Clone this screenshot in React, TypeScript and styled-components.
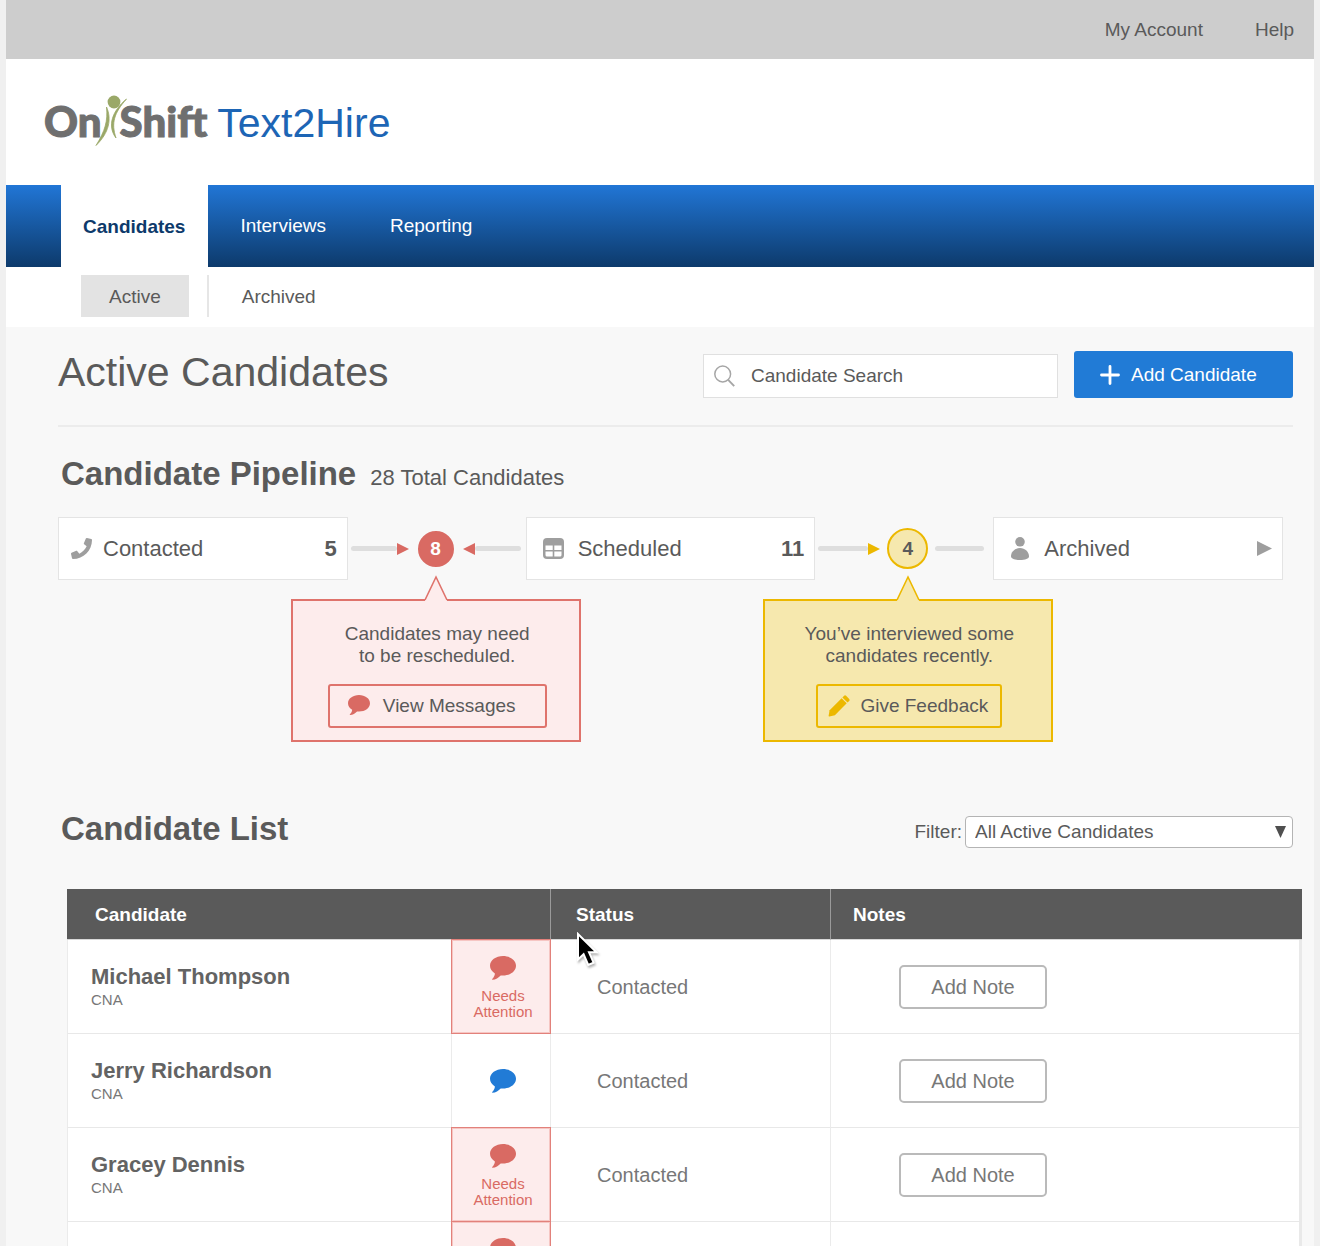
import React from "react";
import styled, { createGlobalStyle } from "styled-components";
import { FaPhone } from "react-icons/fa";

const color = {
  text: "#5a5a5a",
  muted: "#9e9e9e",
  line: "#e4e4e4",
  blue: "#217bd6",
  navy: "#0d3a6b",
  red: "#d96a63",
  redLine: "#df736c",
  redSoft: "#fdecec",
  gold: "#ecb800",
  goldSoft: "#f6e8ae",
};

const GlobalStyle = createGlobalStyle`
  *, *::before, *::after { box-sizing: border-box; }
  body {
    margin: 0;
    background: #f0f0f0;
    color: ${color.text};
    font-family: "Liberation Sans", Arial, sans-serif;
    font-size: 19px;
    line-height: 22px;
  }
  h1, h2, p { margin: 0; }
  a { color: inherit; text-decoration: none; }
  button, input, select { font: inherit; color: inherit; margin: 0; }
  button { cursor: pointer; }
  svg { display: block; flex: none; }
`;

const Shell = styled.div`
  height: 100vh;
  overflow: hidden auto;
  scrollbar-width: none;
  padding: 0 6px;
`;

const Page = styled.div`
  min-height: 100%;
  background: #f8f8f8;
`;

const TopBar = styled.div`
  display: flex;
  justify-content: flex-end;
  align-items: center;
  gap: 52px;
  height: 59px;
  padding: 0 20px;
  background: #cdcdcd;
`;

const Header = styled.header`
  display: flex;
  align-items: center;
  gap: 10px;
  height: 126px;
  padding: 0 38px;
  background: #fff;
`;

const Brand = styled.div`
  display: flex;
  align-items: center;
  padding-bottom: 3px;
  color: #6f6f6f;
  font-family: Lato, sans-serif;
  font-weight: 900;
  font-size: 42px;
  line-height: 52px;
  -webkit-text-stroke: 1px #6f6f6f;

  svg { margin: 0 -8px; }
`;

const Product = styled.span`
  color: #1d65b5;
  font-size: 41px;
  line-height: 52px;
  padding-top: 2px;
`;

const Nav = styled.nav`
  display: flex;
  height: 82px;
  padding-left: 55px;
  background: linear-gradient(#2176d6, ${color.navy});
`;

const NavTab = styled.a<{ $active?: boolean }>`
  display: flex;
  align-items: center;
  padding: ${(p) => (p.$active ? "2px 23px 0 22px" : "0 32px")};
  color: ${(p) => (p.$active ? color.navy : "#fff")};
  background: ${(p) => (p.$active ? "#fff" : "transparent")};
  font-weight: ${(p) => (p.$active ? 700 : 400)};
`;

const SubNav = styled.nav`
  display: flex;
  align-items: center;
  gap: 18px;
  height: 60px;
  padding: 0 0 2px 75px;
  background: #fff;
`;

const SubTab = styled.a<{ $active?: boolean }>`
  padding: 11px 28px 9px;
  background: ${(p) => (p.$active ? "#e3e3e3" : "transparent")};

  & + & {
    padding-left: 33px;
    border-left: 2px solid #e6e6e6;
  }
`;

const Main = styled.main`
  padding: 24px 21px 0 52px;
`;

const TitleRow = styled.div`
  display: flex;
  align-items: flex-end;
  gap: 16px;
  padding-bottom: 27px;
  border-bottom: 2px solid #ececec;
`;

const Title = styled.h1`
  flex: 1;
  align-self: flex-start;
  font-weight: 400;
  font-size: 41px;
  line-height: 42px;
`;

const SearchBox = styled.label`
  display: flex;
  align-items: center;
  gap: 16px;
  width: 355px;
  height: 44px;
  padding-left: 10px;
  background: #fff;
  border: 1px solid #e0e0e0;

  input {
    flex: 1;
    min-width: 0;
    border: 0;
    outline: 0;
    padding: 0;
    background: transparent;
  }
  input::placeholder { color: ${color.text}; opacity: 1; }
`;

const AddButton = styled.button`
  display: flex;
  align-items: center;
  gap: 11px;
  width: 219px;
  height: 47px;
  padding: 0 26px;
  border: 0;
  border-radius: 3px;
  background: ${color.blue};
  color: #fff;
`;

const SectionHead = styled.div`
  display: flex;
  align-items: baseline;
  gap: 14px;
  padding: 26px 0 22px 3px;
`;

const SectionTitle = styled.h2`
  font-size: 33px;
  line-height: 42px;
`;

const Total = styled.span`
  font-size: 22px;
`;

const Pipeline = styled.div`
  display: grid;
  grid-template-columns: 1fr 178px 1fr 178px 1fr;
  padding: 0 10px 228px 0;
`;

const Stage = styled.a<{ $tight?: boolean }>`
  display: flex;
  align-items: center;
  gap: ${(p) => (p.$tight ? 11 : 14)}px;
  height: 63px;
  padding: 0 10px 0 ${(p) => (p.$tight ? 12 : 16)}px;
  background: #fff;
  border: 1px solid ${color.line};
  font-size: 22px;

  strong { margin-left: auto; }
  svg:last-child { margin-left: auto; }
`;

const Connector = styled.div<{ $tone: Tone }>`
  display: flex;
  align-items: center;
  gap: ${(p) => (p.$tone === "red" ? 9 : 7)}px;
  height: 63px;
  padding: 0 ${(p) => (p.$tone === "red" ? 5 : 9)}px 0 3px;
`;

const Track = styled.span<{ $short?: boolean }>`
  display: flex;
  flex: ${(p) => (p.$short ? "0 0 49px" : 1)};
  align-items: center;
`;

const Line = styled.span`
  flex: 1;
  height: 5px;
  border-radius: 3px;
  background: #dedede;
`;

const Node = styled.div<{ $tone: Tone }>`
  position: relative;
  display: flex;
  flex: none;
  align-items: center;
  justify-content: center;
  width: ${(p) => (p.$tone === "red" ? 36 : 41)}px;
  height: ${(p) => (p.$tone === "red" ? 36 : 41)}px;
  border-radius: 50%;
  border: 2px solid ${(p) => (p.$tone === "red" ? color.red : color.gold)};
  background: ${(p) => (p.$tone === "red" ? color.red : color.goldSoft)};
  color: ${(p) => (p.$tone === "red" ? "#fff" : color.text)};
`;

const Callout = styled.div`
  position: absolute;
  top: calc(50% + 26px);
  left: 50%;
  display: flex;
  flex-direction: column;
  align-items: center;
  width: 290px;
  transform: translateX(-50%);

  > svg { margin-bottom: -2px; z-index: 1; }
`;

const CalloutBody = styled.div<{ $tone: Tone }>`
  display: flex;
  flex-direction: column;
  align-items: center;
  gap: 17px;
  width: 100%;
  height: 143px;
  padding: 22px 0 0 3px;
  border: 2px solid ${(p) => (p.$tone === "red" ? color.redLine : color.gold)};
  background: ${(p) => (p.$tone === "red" ? color.redSoft : color.goldSoft)};
  color: ${color.text};
  text-align: center;

  p { white-space: pre-line; }
`;

const CalloutButton = styled.button<{ $tone: Tone }>`
  display: flex;
  align-items: center;
  gap: ${(p) => (p.$tone === "red" ? 13 : 10)}px;
  height: 44px;
  padding: ${(p) => (p.$tone === "red" ? "0 29px 0 18px" : "0 12px 0 10px")};
  border: 2px solid ${(p) => (p.$tone === "red" ? color.redLine : color.gold)};
  border-radius: 3px;
  background: transparent;
`;

const ListHead = styled.div`
  display: flex;
  align-items: center;
  justify-content: space-between;
  padding-left: 3px;
`;

const Filter = styled.div`
  display: flex;
  align-items: center;
  gap: 3px;
  padding-top: 6px;
`;

const SelectWrap = styled.div`
  display: grid;
  align-items: center;
  width: 328px;

  > * { grid-area: 1 / 1; }
  svg { justify-self: end; margin-right: 7px; pointer-events: none; }
`;

const Select = styled.select`
  appearance: none;
  width: 100%;
  height: 32px;
  padding: 0 28px 0 9px;
  border: 1px solid #b4b4b4;
  border-radius: 4px;
  background: #fff;
`;

const TableWrap = styled.div`
  margin: 39px -9px 0 9px;
`;

const Table = styled.table`
  width: 100%;
  table-layout: fixed;
  border-collapse: separate;
  border-spacing: 0;
  background: #fff;
`;

const Th = styled.th<{ $pad: number }>`
  position: relative;
  z-index: 2;
  height: 51px;
  padding: 2px 0 0 ${(p) => p.$pad}px;
  background: #5a5a5a;
  border-bottom: 1px solid #d8d8d8;
  color: #fff;
  text-align: left;

  & + & { border-left: 1px solid #9a9a9a; }
`;

const Td = styled.td<{ $pad: number }>`
  height: 94px;
  padding: 0 0 0 ${(p) => p.$pad}px;
  border-left: 1px solid #ebebeb;
  border-bottom: 1px solid #e8e8e8;
  color: #777;
  font-size: 20px;

  &:last-child { border-right: 3px solid #e9e9e9; }
`;

const MessageTd = styled(Td)<{ $attention: boolean }>`
  color: ${(p) => (p.$attention ? color.red : color.blue)};
  font-size: 15px;
  line-height: 16px;
  text-align: center;
  ${(p) =>
    p.$attention &&
    `
    position: relative;
    z-index: 3;
    padding-top: 16px;
    vertical-align: top;
    background: ${color.redSoft};
    border-color: #e2817b;
    box-shadow: 0 -1px 0 #e2817b, 1px 0 0 #e2817b, 1px -1px 0 #e2817b, inset 0 0 0 1px #f6c6c3;
  `}

  svg { margin: 0 auto; }
  span { display: block; margin-top: 8px; }
`;

const Name = styled.strong`
  display: block;
  padding-top: 2px;
  color: #636363;
  font-size: 22px;
  line-height: 24px;
`;

const Role = styled.span`
  display: block;
  font-size: 15px;
  line-height: 22px;
`;

const NoteButton = styled.button`
  width: 148px;
  height: 44px;
  padding: 0;
  border: 2px solid #bababa;
  border-radius: 5px;
  background: #fff;
`;

const Pointer = styled.svg`
  position: absolute;
  left: 24px;
  top: 43px;
  z-index: 2;
  filter: drop-shadow(1px 2px 1px rgba(0, 0, 0, 0.3));
`;

type Tone = "red" | "gold";

const Figure = () => (
  <svg width="34" height="52" viewBox="0 0 34 52" fill="#9aa868" aria-hidden="true">
    <circle cx="20" cy="7" r="6.4" />
    <path d="M12.5 12C18 24 15 38 2 50.5C11 36 14 26 12.5 12Z" stroke="#9aa868" strokeWidth="0.8" />
    <path d="M32.5 4C20 18 17 28 22 43C13 31 18 16 32.5 4Z" stroke="#9aa868" strokeWidth="0.8" />
  </svg>
);

const Bubble = ({ size = 26, fill = "currentColor" }) => (
  <svg width={size} height={(size * 24) / 26} viewBox="0 0 26 24" fill={fill} aria-hidden="true">
    <path d="M13 0C20.2 0 26 4.3 26 9.8S20.2 19.6 13 19.6C12.2 19.6 11.4 19.5 10.7 19.4C8.6 21.6 5.7 23.6 2.4 23.7C2 23.7 1.9 23.2 2.2 22.9C3.9 21.2 4.8 19.4 4.9 17.4C1.9 15.6 0 12.9 0 9.8C0 4.3 5.8 0 13 0Z" />
  </svg>
);

const Pencil = () => (
  <svg width="22" height="22" viewBox="0 0 22 22" fill={color.gold} aria-hidden="true">
    <path d="M13.6 3.2L18.7 8.3L6.9 20.2L1.4 21.5Q.5 21.6.6 20.7L1.6 15.3Z" />
    <path d="M14.4 2.4L16.1.7Q17.1-.1 18.1.8L21.2 4Q22 5 21.2 5.9L19.5 7.5Z" />
  </svg>
);

const Calendar = () => (
  <svg width="21" height="21" viewBox="0 0 21 21" aria-hidden="true">
    <rect width="21" height="21" rx="4" fill={color.muted} />
    <path d="M2.5 7.5H9.7V12H2.5ZM11.3 7.5H18.5V12H11.3ZM2.5 13.6H9.7V18.5H4Q2.5 18.5 2.5 17ZM11.3 13.6H18.5V17Q18.5 18.5 17 18.5H11.3Z" fill="#fff" />
  </svg>
);

const Person = () => (
  <svg width="20" height="23" viewBox="-1 0 20 23" fill={color.muted} aria-hidden="true">
    <circle cx="9" cy="4.8" r="4.8" />
    <path d="M9 11C14 11 18 15 18 19.2C18 21.8 14 23 9 23S0 21.8 0 19.2C0 15 4 11 9 11Z" />
  </svg>
);

const Arrow = ({ left = false, fill = color.red, w = 12, h = 12 }) => (
  <svg width={w} height={h} viewBox="0 0 12 12" fill={fill} aria-hidden="true">
    <path d={left ? "M12 0V12L0 6Z" : "M0 0V12L12 6Z"} />
  </svg>
);

const Tip = ({ tone }: { tone: Tone }) => (
  <svg width="24" height="26" viewBox="0 0 24 26" aria-hidden="true">
    <path
      d="M1 25L12 2L23 25V26H1Z"
      fill={tone === "red" ? color.redSoft : color.goldSoft}
    />
    <path
      d="M1 25L12 2L23 25"
      fill="none"
      stroke={tone === "red" ? color.redLine : color.gold}
      strokeWidth="1.6"
    />
  </svg>
);

type Candidate = { name?: string; role?: string; status?: string; attention: boolean };

const candidates: Candidate[] = [
  { name: "Michael Thompson", role: "CNA", status: "Contacted", attention: true },
  { name: "Jerry Richardson", role: "CNA", status: "Contacted", attention: false },
  { name: "Gracey Dennis", role: "CNA", status: "Contacted", attention: true },
  { attention: true },
];

export default function App() {
  return (
    <>
      <GlobalStyle />
      <Shell>
        <Page>
          <TopBar>
            <a href="#account">My Account</a>
            <a href="#help">Help</a>
          </TopBar>
          <Header>
            <Brand>
              <span>On</span>
              <Figure />
              <span>Shift</span>
            </Brand>
            <Product>Text2Hire</Product>
          </Header>
          <Nav>
            <NavTab href="#candidates" $active>Candidates</NavTab>
            <NavTab href="#interviews">Interviews</NavTab>
            <NavTab href="#reporting">Reporting</NavTab>
          </Nav>
          <SubNav>
            <SubTab href="#active" $active>Active</SubTab>
            <SubTab href="#archived">Archived</SubTab>
          </SubNav>
          <Main>
            <TitleRow>
              <Title>Active Candidates</Title>
              <SearchBox>
                <svg width="21" height="22" viewBox="0 0 21 22" fill="none" stroke="#a6a6a6" strokeWidth="1.5" aria-hidden="true">
                  <circle cx="8.7" cy="9" r="7.9" />
                  <path d="M14.2 14.8L20.2 21.2" strokeWidth="1.9" />
                </svg>
                <input type="search" placeholder="Candidate Search" aria-label="Candidate Search" />
              </SearchBox>
              <AddButton type="button">
                <svg width="20" height="20" viewBox="0 0 20 20" stroke="#fff" strokeWidth="2.8" strokeLinecap="round" aria-hidden="true">
                  <path d="M10 1.5V18.5M1.5 10H18.5" />
                </svg>
                Add Candidate
              </AddButton>
            </TitleRow>

            <SectionHead>
              <SectionTitle>Candidate Pipeline</SectionTitle>
              <Total>28 Total Candidates</Total>
            </SectionHead>
            <Pipeline>
              <Stage href="#contacted" $tight>
                <FaPhone size={21} color={color.muted} />
                Contacted
                <strong>5</strong>
              </Stage>
              <Connector $tone="red">
                <Track><Line /><Arrow /></Track>
                <Node $tone="red">
                  <strong>8</strong>
                  <Callout>
                    <Tip tone="red" />
                    <CalloutBody $tone="red">
                      <p>{"Candidates may need\nto be rescheduled."}</p>
                      <CalloutButton type="button" $tone="red">
                        <Bubble size={22} fill={color.red} />
                        View Messages
                      </CalloutButton>
                    </CalloutBody>
                  </Callout>
                </Node>
                <Track><Arrow left /><Line /></Track>
              </Connector>
              <Stage href="#scheduled">
                <Calendar />
                Scheduled
                <strong>11</strong>
              </Stage>
              <Connector $tone="gold">
                <Track><Line /><Arrow fill={color.gold} /></Track>
                <Node $tone="gold">
                  <strong>4</strong>
                  <Callout>
                    <Tip tone="gold" />
                    <CalloutBody $tone="gold">
                      <p>{"You’ve interviewed some\ncandidates recently."}</p>
                      <CalloutButton type="button" $tone="gold">
                        <Pencil />
                        Give Feedback
                      </CalloutButton>
                    </CalloutBody>
                  </Callout>
                </Node>
                <Track $short><Line /></Track>
              </Connector>
              <Stage href="#archived-stage">
                <Person />
                Archived
                <Arrow fill={color.muted} w={15} h={15} />
              </Stage>
            </Pipeline>

            <ListHead>
              <SectionTitle>Candidate List</SectionTitle>
              <Filter>
                <label htmlFor="filter">Filter:</label>
                <SelectWrap>
                  <Select id="filter">
                    <option>All Active Candidates</option>
                  </Select>
                  <svg width="11" height="12" viewBox="0 0 11 12" fill="#4f4f4f" aria-hidden="true">
                    <path d="M0 0H11L5.5 12Z" />
                  </svg>
                </SelectWrap>
              </Filter>
            </ListHead>
            <TableWrap>
              <Table>
                <colgroup>
                  <col style={{ width: "384px" }} />
                  <col style={{ width: "99px" }} />
                  <col style={{ width: "280px" }} />
                  <col />
                </colgroup>
                <thead>
                  <tr>
                    <Th colSpan={2} $pad={28}>Candidate</Th>
                    <Th $pad={25}>
                      Status
                      <Pointer width="24" height="36" viewBox="0 0 24 36" aria-hidden="true">
                        <path d="M3 2V27.5L8.6 22.3L13.2 33L18.6 30.7L14 20.3H21.5Z" fill="#000" stroke="#fff" strokeWidth="2" />
                      </Pointer>
                    </Th>
                    <Th $pad={22}>Notes</Th>
                  </tr>
                </thead>
                <tbody>
                  {candidates.map((c, i) => (
                    <tr key={i}>
                      <Td $pad={23}>
                        {c.name && <Name>{c.name}</Name>}
                        {c.role && <Role>{c.role}</Role>}
                      </Td>
                      <MessageTd $pad={4} $attention={c.attention}>
                        <Bubble />
                        {c.attention && c.name && <span>Needs<br />Attention</span>}
                      </MessageTd>
                      <Td $pad={46}>{c.status}</Td>
                      <Td $pad={68}>
                        {c.name && <NoteButton type="button">Add Note</NoteButton>}
                      </Td>
                    </tr>
                  ))}
                </tbody>
              </Table>
            </TableWrap>
          </Main>
        </Page>
      </Shell>
    </>
  );
}
